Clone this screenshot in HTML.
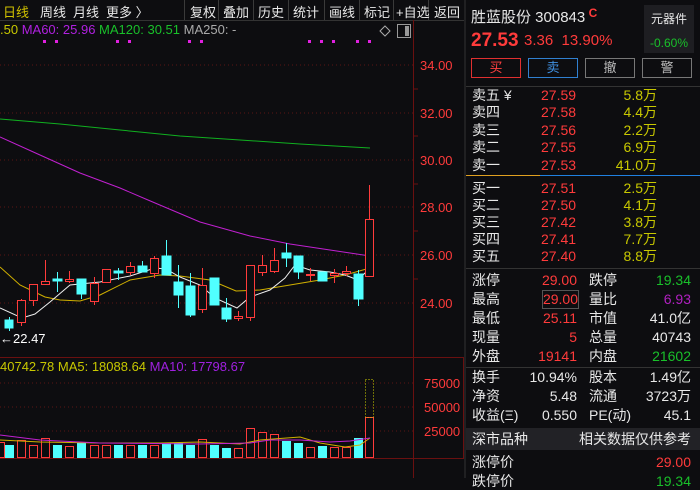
<!DOCTYPE html>
<html><head><meta charset="utf-8"><style>
body{margin:0;width:700px;height:478px;background:#0d0d10;overflow:hidden;font-family:"Liberation Sans","Noto Sans CJK SC",sans-serif;position:relative;color:#ddd}
.a{position:absolute;white-space:nowrap}
.r{color:#ff3b3b}.g{color:#19c02a}.y{color:#c8c800}.w{color:#e8e8e8}.p{color:#c020c0}
.btn{position:absolute;top:58px;width:50px;height:20px;border:1px solid;box-sizing:border-box;text-align:center;font-size:13px;line-height:18px}
.row{position:absolute;left:472px;width:222px;font-size:14px;height:17px}
.row span{position:absolute;top:0;line-height:17px;height:17px}
</style></head><body>
<svg width="700" height="478" style="position:absolute;left:0;top:0">
<line x1="0" y1="20.5" x2="464" y2="20.5" stroke="#333"/>
<g stroke="#3a3a3a"><line x1="184.5" y1="0" x2="184.5" y2="20"/><line x1="218.5" y1="0" x2="218.5" y2="20"/><line x1="253.5" y1="0" x2="253.5" y2="20"/><line x1="288.5" y1="0" x2="288.5" y2="20"/><line x1="324.5" y1="0" x2="324.5" y2="20"/><line x1="359.5" y1="0" x2="359.5" y2="20"/><line x1="393.5" y1="0" x2="393.5" y2="20"/><line x1="428.5" y1="0" x2="428.5" y2="20"/></g>
<line x1="465" y1="0" x2="465" y2="478" stroke="#333"/>
<g stroke="#5a1515" stroke-dasharray="1,3"><line x1="0" y1="65" x2="413" y2="65"/><line x1="0" y1="113" x2="413" y2="113"/><line x1="0" y1="160" x2="413" y2="160"/><line x1="0" y1="207" x2="413" y2="207"/><line x1="0" y1="255" x2="413" y2="255"/><line x1="0" y1="303" x2="413" y2="303"/><line x1="0" y1="383" x2="413" y2="383"/><line x1="0" y1="407" x2="413" y2="407"/><line x1="0" y1="431" x2="413" y2="431"/></g>
<line x1="413.5" y1="20" x2="413.5" y2="478" stroke="#6a1010"/>
<rect x="413.5" y="357.5" width="50" height="101" fill="none" stroke="#6a1010"/>
<line x1="0" y1="357.5" x2="413" y2="357.5" stroke="#6a1010"/>
<line x1="0" y1="458.5" x2="413" y2="458.5" stroke="#6a1010"/>
<g stroke="#6a1010"><line x1="413" y1="89" x2="418" y2="89"/><line x1="413" y1="136" x2="418" y2="136"/><line x1="413" y1="184" x2="418" y2="184"/><line x1="413" y1="231" x2="418" y2="231"/><line x1="413" y1="279" x2="418" y2="279"/></g>
<path d="M385 26 L390 31 L385 36 L380 31 Z" fill="none" stroke="#aaa"/>
<rect x="397.5" y="24.5" width="13" height="13" fill="none" stroke="#999"/><rect x="405" y="26" width="4" height="10" fill="#999"/>
<g fill="#e020e0"><rect x="43" y="40" width="3" height="3"/><rect x="55" y="40" width="3" height="3"/><rect x="116" y="40" width="3" height="3"/><rect x="128" y="40" width="3" height="3"/><rect x="188" y="40" width="3" height="3"/><rect x="200" y="40" width="3" height="3"/><rect x="308" y="40" width="3" height="3"/><rect x="320" y="40" width="3" height="3"/><rect x="332" y="40" width="3" height="3"/><rect x="356" y="40" width="3" height="3"/><rect x="368" y="40" width="3" height="3"/></g>
<polyline points="0,119 60,124 120,130 180,136 240,140 300,144 370,148" fill="none" stroke="#10b020" stroke-width="1"/>
<polyline points="0,137 40,155 80,173 120,188 148,200 200,222 250,236 290,244 330,250 370,256" fill="none" stroke="#c020d0"/>
<polyline points="0,267 20,285 45,297 60,300 80,301 100,295 130,280 160,275 180,276 210,280 236,291 260,290 290,285 320,280 345,275 370,268" fill="none" stroke="#d0b000"/>
<polyline points="0,308 22,318 35,314 50,302 70,285 100,282 130,276 155,268 166,269 180,277 200,285 215,298 237,308 250,297 270,290 285,278 295,265 310,270 330,272 345,275 358,280 370,268" fill="none" stroke="#eee"/>
<g stroke-width="1">
<g stroke="#ff3b3b" fill="#0d0d10">
<line x1="21.5" y1="299" x2="21.5" y2="326"/><rect x="17.5" y="300.5" width="8" height="22"/>
<line x1="33.5" y1="284" x2="33.5" y2="306"/><rect x="29.5" y="284.5" width="8" height="16"/>
<line x1="45.5" y1="260" x2="45.5" y2="285"/><rect x="41.5" y="281.5" width="8" height="3"/>
<line x1="69.5" y1="271" x2="69.5" y2="283"/><rect x="65.5" y="279.5" width="8" height="2"/>
<line x1="94.5" y1="277" x2="94.5" y2="305"/><rect x="90.5" y="283.5" width="8" height="18"/>
<rect x="102.5" y="269.5" width="8" height="13"/>
<line x1="130.5" y1="262" x2="130.5" y2="275"/><rect x="126.5" y="266.5" width="8" height="6"/>
<line x1="154.5" y1="256" x2="154.5" y2="278"/><rect x="150.5" y="258.5" width="8" height="15"/>
<line x1="202.5" y1="268" x2="202.5" y2="313"/><rect x="198.5" y="285.5" width="8" height="24"/>
<line x1="238.5" y1="311" x2="238.5" y2="321"/><rect x="234.5" y="316.5" width="8" height="2"/>
<line x1="250.5" y1="317" x2="250.5" y2="321"/><rect x="246.5" y="265.5" width="8" height="52"/>
<line x1="262.5" y1="255" x2="262.5" y2="276"/><rect x="258.5" y="265.5" width="8" height="7"/>
<line x1="274.5" y1="248" x2="274.5" y2="273"/><rect x="270.5" y="260.5" width="8" height="11"/>
<line x1="310.5" y1="268" x2="310.5" y2="281"/><rect x="306.5" y="274.5" width="8" height="1"/>
<line x1="334.5" y1="269" x2="334.5" y2="283"/><rect x="330.5" y="273.5" width="8" height="2"/>
<line x1="346.5" y1="266" x2="346.5" y2="276"/><rect x="342.5" y="271.5" width="8" height="2"/>
<line x1="369.5" y1="185" x2="369.5" y2="219"/><rect x="365.5" y="219.5" width="8" height="57"/>
</g>
<g stroke="#50ffff" fill="#50ffff">
<line x1="9.5" y1="317" x2="9.5" y2="331"/><rect x="5" y="320" width="8" height="8"/>
<line x1="57.5" y1="272" x2="57.5" y2="292"/><rect x="53" y="279" width="9" height="2"/>
<line x1="81.5" y1="279" x2="81.5" y2="299"/><rect x="77" y="279" width="9" height="15"/>
<line x1="118.5" y1="268" x2="118.5" y2="280"/><rect x="114" y="271" width="9" height="2"/>
<line x1="142.5" y1="261" x2="142.5" y2="272"/><rect x="138" y="266" width="9" height="6"/>
<line x1="166.5" y1="240" x2="166.5" y2="275"/><rect x="162" y="256" width="9" height="19"/>
<line x1="178.5" y1="265" x2="178.5" y2="308"/><rect x="174" y="282" width="9" height="13"/>
<line x1="190.5" y1="273" x2="190.5" y2="317"/><rect x="186" y="286" width="9" height="29"/>
<rect x="210" y="278" width="9" height="27"/>
<line x1="226.5" y1="298" x2="226.5" y2="322"/><rect x="222" y="308" width="9" height="11"/>
<line x1="286.5" y1="243" x2="286.5" y2="267"/><rect x="282" y="253" width="9" height="5"/>
<line x1="298.5" y1="256" x2="298.5" y2="279"/><rect x="294" y="256" width="9" height="16"/>
<rect x="318" y="272" width="9" height="9"/>
<line x1="358.5" y1="270" x2="358.5" y2="306"/><rect x="354" y="274" width="9" height="25"/>
</g></g>
<text x="0" y="343" fill="#fff" font-size="13" font-family="Liberation Sans">←22.47</text>
<g fill="#0d0d10" stroke="#ff3b3b">
<rect x="-3.5" y="442.5" width="8" height="15"/><rect x="17.5" y="440.5" width="8" height="17"/><rect x="29.5" y="445.5" width="8" height="12"/><rect x="41.5" y="438.5" width="8" height="19"/><rect x="65.5" y="446.5" width="8" height="11"/><rect x="90.5" y="445.5" width="8" height="12"/><rect x="102.5" y="445.5" width="8" height="12"/><rect x="126.5" y="445.5" width="8" height="12"/><rect x="150.5" y="445.5" width="8" height="12"/><rect x="198.5" y="439.5" width="8" height="18"/><rect x="234.5" y="448.5" width="8" height="9"/><rect x="246.5" y="428.5" width="8" height="29"/><rect x="258.5" y="432.5" width="8" height="25"/><rect x="270.5" y="434.5" width="8" height="23"/><rect x="306.5" y="447.5" width="8" height="10"/><rect x="330.5" y="447.5" width="8" height="10"/><rect x="342.5" y="447.5" width="8" height="10"/><rect x="365.5" y="417.5" width="8" height="40"/>
</g>
<rect x="365.5" y="379.5" width="8" height="38" fill="none" stroke="#d0d000" stroke-dasharray="1,2"/>
<g fill="#50ffff"><rect x="5" y="445" width="9" height="13"/><rect x="53" y="445" width="9" height="13"/><rect x="77" y="443" width="9" height="15"/><rect x="114" y="445" width="9" height="13"/><rect x="138" y="445" width="9" height="13"/><rect x="162" y="443" width="9" height="15"/><rect x="174" y="443" width="9" height="15"/><rect x="186" y="445" width="9" height="13"/><rect x="210" y="445" width="9" height="13"/><rect x="222" y="448" width="9" height="10"/><rect x="282" y="441" width="9" height="17"/><rect x="294" y="443" width="9" height="15"/><rect x="318" y="446" width="9" height="12"/><rect x="354" y="438" width="9" height="20"/></g>
<polyline points="0,440 40,442 100,443 160,443 200,442 240,444 260,440 300,437 320,443 345,447 360,445 370,438" fill="none" stroke="#d0b000"/>
<polyline points="0,435 40,440 100,443 200,444 250,443 270,440 300,440 330,442 350,441 370,438" fill="none" stroke="#c020d0"/>
<g fill="#ff3b3b" font-size="13" font-family="Liberation Sans"><text x="420" y="70">34.00</text><text x="420" y="118">32.00</text><text x="420" y="165">30.00</text><text x="420" y="212">28.00</text><text x="420" y="260">26.00</text><text x="420" y="308">24.00</text><text x="424" y="388">75000</text><text x="424" y="412">50000</text><text x="424" y="436">25000</text></g>
<line x1="466" y1="86.5" x2="700" y2="86.5" stroke="#333"/>
<line x1="466" y1="175.5" x2="540" y2="175.5" stroke="#e0a020"/><line x1="540" y1="175.5" x2="700" y2="175.5" stroke="#2080e0"/>
<line x1="466" y1="268.5" x2="700" y2="268.5" stroke="#333"/>
<line x1="466" y1="367.5" x2="700" y2="367.5" stroke="#333"/>
<rect x="466" y="428" width="234" height="22" fill="#222226"/>
</svg>
<div class="a" style="top:2px;left:3px;font-size:13px;color:#d0c000">日线</div>
<div class="a w" style="top:2px;left:40px;font-size:13px">周线</div>
<div class="a w" style="top:2px;left:73px;font-size:13px">月线</div>
<div class="a w" style="top:2px;left:106px;font-size:13px">更多 〉</div>
<div class="a w" style="top:2px;left:190px;font-size:13px">复权</div>
<div class="a w" style="top:2px;left:223px;font-size:13px">叠加</div>
<div class="a w" style="top:2px;left:258px;font-size:13px">历史</div>
<div class="a w" style="top:2px;left:293px;font-size:13px">统计</div>
<div class="a w" style="top:2px;left:329px;font-size:13px">画线</div>
<div class="a w" style="top:2px;left:364px;font-size:13px">标记</div>
<div class="a w" style="top:2px;left:396px;font-size:13px">+自选</div>
<div class="a w" style="top:2px;left:434px;font-size:13px">返回</div>
<div class="a" style="top:22px;left:0;font-size:13px"><span class="y">.50</span> <span class="p" style="color:#b020e0">MA60: 25.96</span> <span class="g">MA120: 30.51</span> <span style="color:#aaa">MA250: -</span></div>
<div class="a" style="top:359px;left:0;font-size:13px"><span class="y">40742.78</span> <span class="y">MA5: 18088.64</span> <span style="color:#a020e0">MA10: 17798.67</span></div>
<div class="a w" style="top:6px;left:471px;font-size:15px">胜蓝股份 300843<span class="r" style="font-size:12px;font-weight:bold;vertical-align:top"> C</span></div>
<div class="a" style="top:5px;left:644px;width:50px;height:48px;background:#1e1e22;text-align:center;font-size:12px"><div class="w" style="margin-top:5px">元器件</div><div class="g" style="margin-top:9px">-0.60%</div></div>
<div class="a r" style="top:30px;left:471px;font-size:19px;font-weight:bold">27.53</div>
<div class="a r" style="top:32px;left:524px;font-size:15px">3.36&nbsp; 13.90%</div>
<div class="btn" style="left:471px;border-color:#e03030;color:#ff4040">买</div>
<div class="btn" style="left:528px;border-color:#3080d0;color:#4090e0">卖</div>
<div class="btn" style="left:585px;border-color:#777;color:#bbb">撤</div>
<div class="btn" style="left:642px;border-color:#777;color:#bbb">警</div>
<div class="row" style="top:87px"><span class="w">卖五 ¥</span><span class="r" style="left:69px">27.59</span><span class="y" style="right:37px">5.8万</span></div>
<div class="row" style="top:104px"><span class="w">卖四</span><span class="r" style="left:69px">27.58</span><span class="y" style="right:37px">4.4万</span></div>
<div class="row" style="top:122px"><span class="w">卖三</span><span class="r" style="left:69px">27.56</span><span class="y" style="right:37px">2.2万</span></div>
<div class="row" style="top:139px"><span class="w">卖二</span><span class="r" style="left:69px">27.55</span><span class="y" style="right:37px">6.9万</span></div>
<div class="row" style="top:157px"><span class="w">卖一</span><span class="r" style="left:69px">27.53</span><span class="y" style="right:37px">41.0万</span></div>
<div class="row" style="top:180px"><span class="w">买一</span><span class="r" style="left:69px">27.51</span><span class="y" style="right:37px">2.5万</span></div>
<div class="row" style="top:197px"><span class="w">买二</span><span class="r" style="left:69px">27.50</span><span class="y" style="right:37px">4.1万</span></div>
<div class="row" style="top:214px"><span class="w">买三</span><span class="r" style="left:69px">27.42</span><span class="y" style="right:37px">3.8万</span></div>
<div class="row" style="top:231px"><span class="w">买四</span><span class="r" style="left:69px">27.41</span><span class="y" style="right:37px">7.7万</span></div>
<div class="row" style="top:248px"><span class="w">买五</span><span class="r" style="left:69px">27.40</span><span class="y" style="right:37px">8.8万</span></div>
<div class="row" style="top:272px"><span class="w">涨停</span><span class="r" style="right:117px">29.00</span><span class="w" style="left:117px">跌停</span><span class="g" style="right:3px">19.34</span></div>
<div class="row" style="top:291px"><span class="w">最高</span><span class="r" style="right:116px;outline:1px solid #555">29.00</span><span class="w" style="left:117px">量比</span><span style="right:3px;color:#b020c0">6.93</span></div>
<div class="row" style="top:310px"><span class="w">最低</span><span class="r" style="right:117px">25.11</span><span class="w" style="left:117px">市值</span><span class="w" style="right:3px">41.0亿</span></div>
<div class="row" style="top:329px"><span class="w">现量</span><span class="r" style="right:117px">5</span><span class="w" style="left:117px">总量</span><span class="w" style="right:3px">40743</span></div>
<div class="row" style="top:348px"><span class="w">外盘</span><span class="r" style="right:117px">19141</span><span class="w" style="left:117px">内盘</span><span class="g" style="right:3px">21602</span></div>
<div class="row" style="top:369px"><span class="w">换手</span><span class="w" style="right:117px">10.94%</span><span class="w" style="left:117px">股本</span><span class="w" style="right:3px">1.49亿</span></div>
<div class="row" style="top:388px"><span class="w">净资</span><span class="w" style="right:117px">5.48</span><span class="w" style="left:117px">流通</span><span class="w" style="right:3px">3723万</span></div>
<div class="row" style="top:407px"><span class="w">收益(Ξ)</span><span class="w" style="right:117px">0.550</span><span class="w" style="left:117px">PE(动)</span><span class="w" style="right:3px">45.1</span></div>
<div class="row" style="top:431px"><span class="w">深市品种</span><span class="w" style="right:3px">相关数据仅供参考</span></div>
<div class="row" style="top:454px"><span class="w">涨停价</span><span class="r" style="right:3px">29.00</span></div>
<div class="row" style="top:473px"><span class="w">跌停价</span><span class="g" style="right:3px">19.34</span></div>
</body></html>
